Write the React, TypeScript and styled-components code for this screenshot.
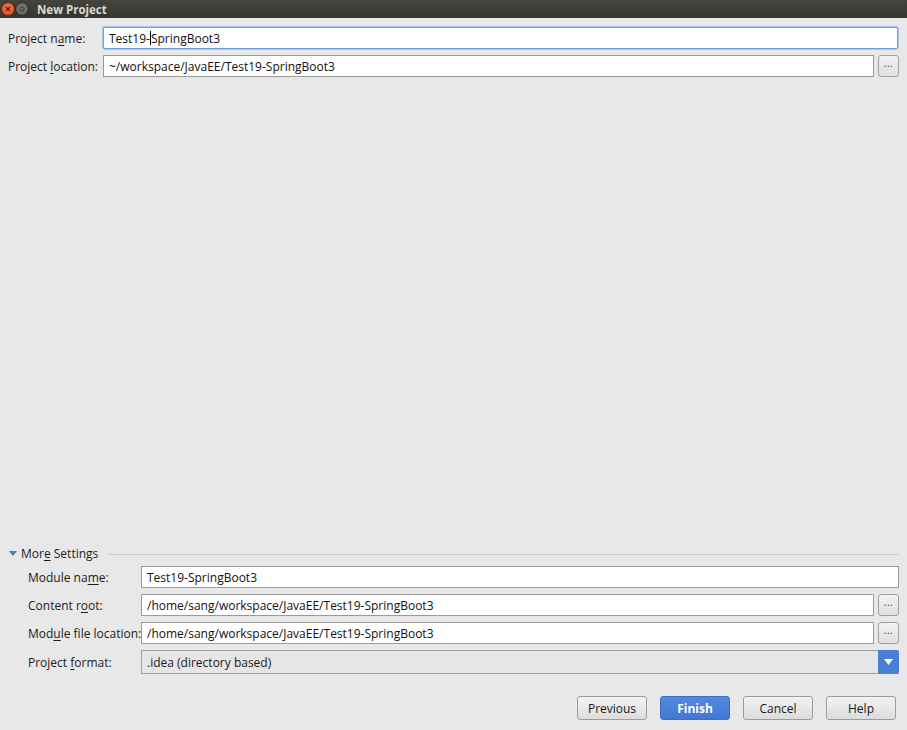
import React from 'react';
import styled, { createGlobalStyle } from 'styled-components';

const GlobalStyle = createGlobalStyle`
  html, body {
    margin: 0;
    padding: 0;
    background: #e8e8e8;
  }
  body {
    font-family: 'Open Sans', 'Noto Sans', sans-serif;
    font-size: 12px;
    color: #1a1a1a;
  }
`;

const Window = styled.div`
  display: flex;
  flex-direction: column;
  width: 907px;
  height: 730px;
  background: #e8e8e8;
  overflow: hidden;
`;

const TitleBar = styled.div`
  display: flex;
  align-items: center;
  height: 18px;
  padding-left: 2px;
  background: linear-gradient(#45443f, #35342f);
  flex-shrink: 0;
`;

const WinButton = styled.span<{ $close?: boolean }>`
  display: inline-flex;
  align-items: center;
  justify-content: center;
  width: 12px;
  height: 12px;
  border-radius: 50%;
  margin-right: 2px;
  background: ${(p) =>
    p.$close
      ? 'radial-gradient(circle at 50% 40%, #f37a4e, #d84a1c)'
      : 'radial-gradient(circle at 50% 40%, #7c7b76, #5a5955)'};
  box-shadow: 0 0 0 1px ${(p) => (p.$close ? '#7a2a10' : '#2b2a27')};
`;

const Title = styled.span`
  margin-left: 7px;
  font-family: 'Open Sans', sans-serif;
  font-weight: 700;
  font-size: 11.5px;
  color: #dcd8cf;
`;

const Body = styled.div`
  display: flex;
  flex-direction: column;
  flex: 1;
  padding: 9px 8px 10px 8px;
`;

const Form = styled.div<{ $label: number }>`
  display: grid;
  grid-template-columns: ${(p) => p.$label}px 1fr auto;
  row-gap: 6px;
  align-items: center;
`;

const Label = styled.label`
  font-size: 12px;
  white-space: nowrap;
  color: #1c1c1c;
`;

const Key = styled.span`
  text-decoration: underline;
  text-underline-offset: 2px;
`;

const Field = styled.div<{ $focused?: boolean; $span?: boolean }>`
  display: flex;
  align-items: center;
  height: 22px;
  box-sizing: border-box;
  padding-left: 5px;
  background: #ffffff;
  border: 1px solid ${(p) => (p.$focused ? '#6f9fe0' : '#9a9a9a')};
  box-shadow: ${(p) => (p.$focused ? '0 0 0 1px #a9c7f0' : 'none')};
  border-radius: ${(p) => (p.$focused ? '2px' : '0')};
  grid-column: ${(p) => (p.$span ? '2 / 4' : 'auto')};
  margin-right: ${(p) => (p.$focused ? '1px' : '0')};
  font-size: 12px;
  color: #111;
  white-space: nowrap;
  overflow: hidden;
`;

const Caret = styled.span`
  display: inline-block;
  width: 1px;
  height: 14px;
  background: #000;
  vertical-align: middle;
`;

const BrowseButton = styled.button`
  width: 21px;
  height: 22px;
  margin-left: 4px;
  padding: 0 0 6px 0;
  border: 1px solid #a0a0a0;
  border-radius: 3px;
  background: linear-gradient(#f2f2f2, #e0e0e0);
  font-family: 'Open Sans', sans-serif;
  font-size: 10px;
  color: #333;
  letter-spacing: 0.5px;
`;

const Combo = styled.div`
  grid-column: 2 / 4;
  display: flex;
  align-items: stretch;
  height: 24px;
  box-sizing: border-box;
  border: 1px solid #a0a0a0;
  border-right: none;
  background: #e6e6e6;
  font-size: 12px;
`;

const ComboText = styled.div`
  flex: 1;
  display: flex;
  align-items: center;
  padding-left: 5px;
`;

const ComboArrow = styled.div`
  width: 21px;
  margin: -1px 0;
  display: flex;
  align-items: center;
  justify-content: center;
  background: #4a7fd8;
  border-radius: 0 3px 3px 0;
`;

const Spacer = styled.div`
  flex: 1;
`;

const SectionHeader = styled.div`
  display: flex;
  align-items: center;
  gap: 4px;
  margin-bottom: 4px;
  padding-left: 1px;
`;

const SectionTitle = styled.span`
  font-size: 12px;
  color: #1c1c1c;
  white-space: nowrap;
`;

const Divider = styled.div`
  flex: 1;
  height: 1px;
  margin-left: 6px;
  margin-top: 1px;
  background: #cfcfcf;
`;

const Indent = styled.div`
  padding-left: 20px;
`;

const Footer = styled.div`
  display: flex;
  justify-content: flex-end;
  gap: 13px;
  margin-top: 22px;
  padding-right: 3px;
`;

const DialogButton = styled.button<{ $primary?: boolean }>`
  width: 70px;
  height: 24px;
  border-radius: 3px;
  border: 1px solid ${(p) => (p.$primary ? '#3f6fc2' : '#9c9c9c')};
  background: ${(p) =>
    p.$primary ? 'linear-gradient(#5189e0, #4377d3)' : 'linear-gradient(#f3f3f3, #dcdcdc)'};
  color: ${(p) => (p.$primary ? '#ffffff' : '#1a1a1a')};
  font-family: 'Open Sans', sans-serif;
  font-weight: ${(p) => (p.$primary ? 700 : 400)};
  font-size: 12px;
  padding: 0;
`;

export default function App() {
  return (
    <>
      <GlobalStyle />
      <Window>
        <TitleBar>
          <WinButton $close>
            <svg width="6" height="6" viewBox="0 0 6 6">
              <path d="M1 1L5 5M5 1L1 5" stroke="#5a1c08" strokeWidth="1.3" />
            </svg>
          </WinButton>
          <WinButton>
            <svg width="6" height="6" viewBox="0 0 6 6">
              <circle cx="3" cy="3" r="2" fill="none" stroke="#3a3935" strokeWidth="1" />
            </svg>
          </WinButton>
          <Title>New Project</Title>
        </TitleBar>
        <Body>
          <Form $label={95}>
            <Label>
              Project n<Key>a</Key>me:
            </Label>
            <Field $focused $span>
              Test19-<Caret />SpringBoot3
            </Field>
            <Label>
              Project <Key>l</Key>ocation:
            </Label>
            <Field>~/workspace/JavaEE/Test19-SpringBoot3</Field>
            <BrowseButton>...</BrowseButton>
          </Form>

          <Spacer />

          <SectionHeader>
            <svg width="8" height="6" viewBox="0 0 8 6">
              <path d="M0 0H8L4 5Z" fill="#3d7fc9" />
            </svg>
            <SectionTitle>
              Mor<Key>e</Key> Settings
            </SectionTitle>
            <Divider />
          </SectionHeader>
          <Indent>
            <Form $label={113}>
              <Label>
                Module na<Key>m</Key>e:
              </Label>
              <Field $span>Test19-SpringBoot3</Field>
              <Label>
                Content r<Key>o</Key>ot:
              </Label>
              <Field>/home/sang/workspace/JavaEE/Test19-SpringBoot3</Field>
              <BrowseButton>...</BrowseButton>
              <Label>
                Mod<Key>u</Key>le file location:
              </Label>
              <Field>/home/sang/workspace/JavaEE/Test19-SpringBoot3</Field>
              <BrowseButton>...</BrowseButton>
              <Label>
                Project <Key>f</Key>ormat:
              </Label>
              <Combo>
                <ComboText>.idea (directory based)</ComboText>
                <ComboArrow>
                  <svg width="9" height="6" viewBox="0 0 9 6">
                    <path d="M0 0H9L4.5 6Z" fill="#ffffff" />
                  </svg>
                </ComboArrow>
              </Combo>
            </Form>
          </Indent>

          <Footer>
            <DialogButton>Previous</DialogButton>
            <DialogButton $primary>Finish</DialogButton>
            <DialogButton>Cancel</DialogButton>
            <DialogButton>Help</DialogButton>
          </Footer>
        </Body>
      </Window>
    </>
  );
}
